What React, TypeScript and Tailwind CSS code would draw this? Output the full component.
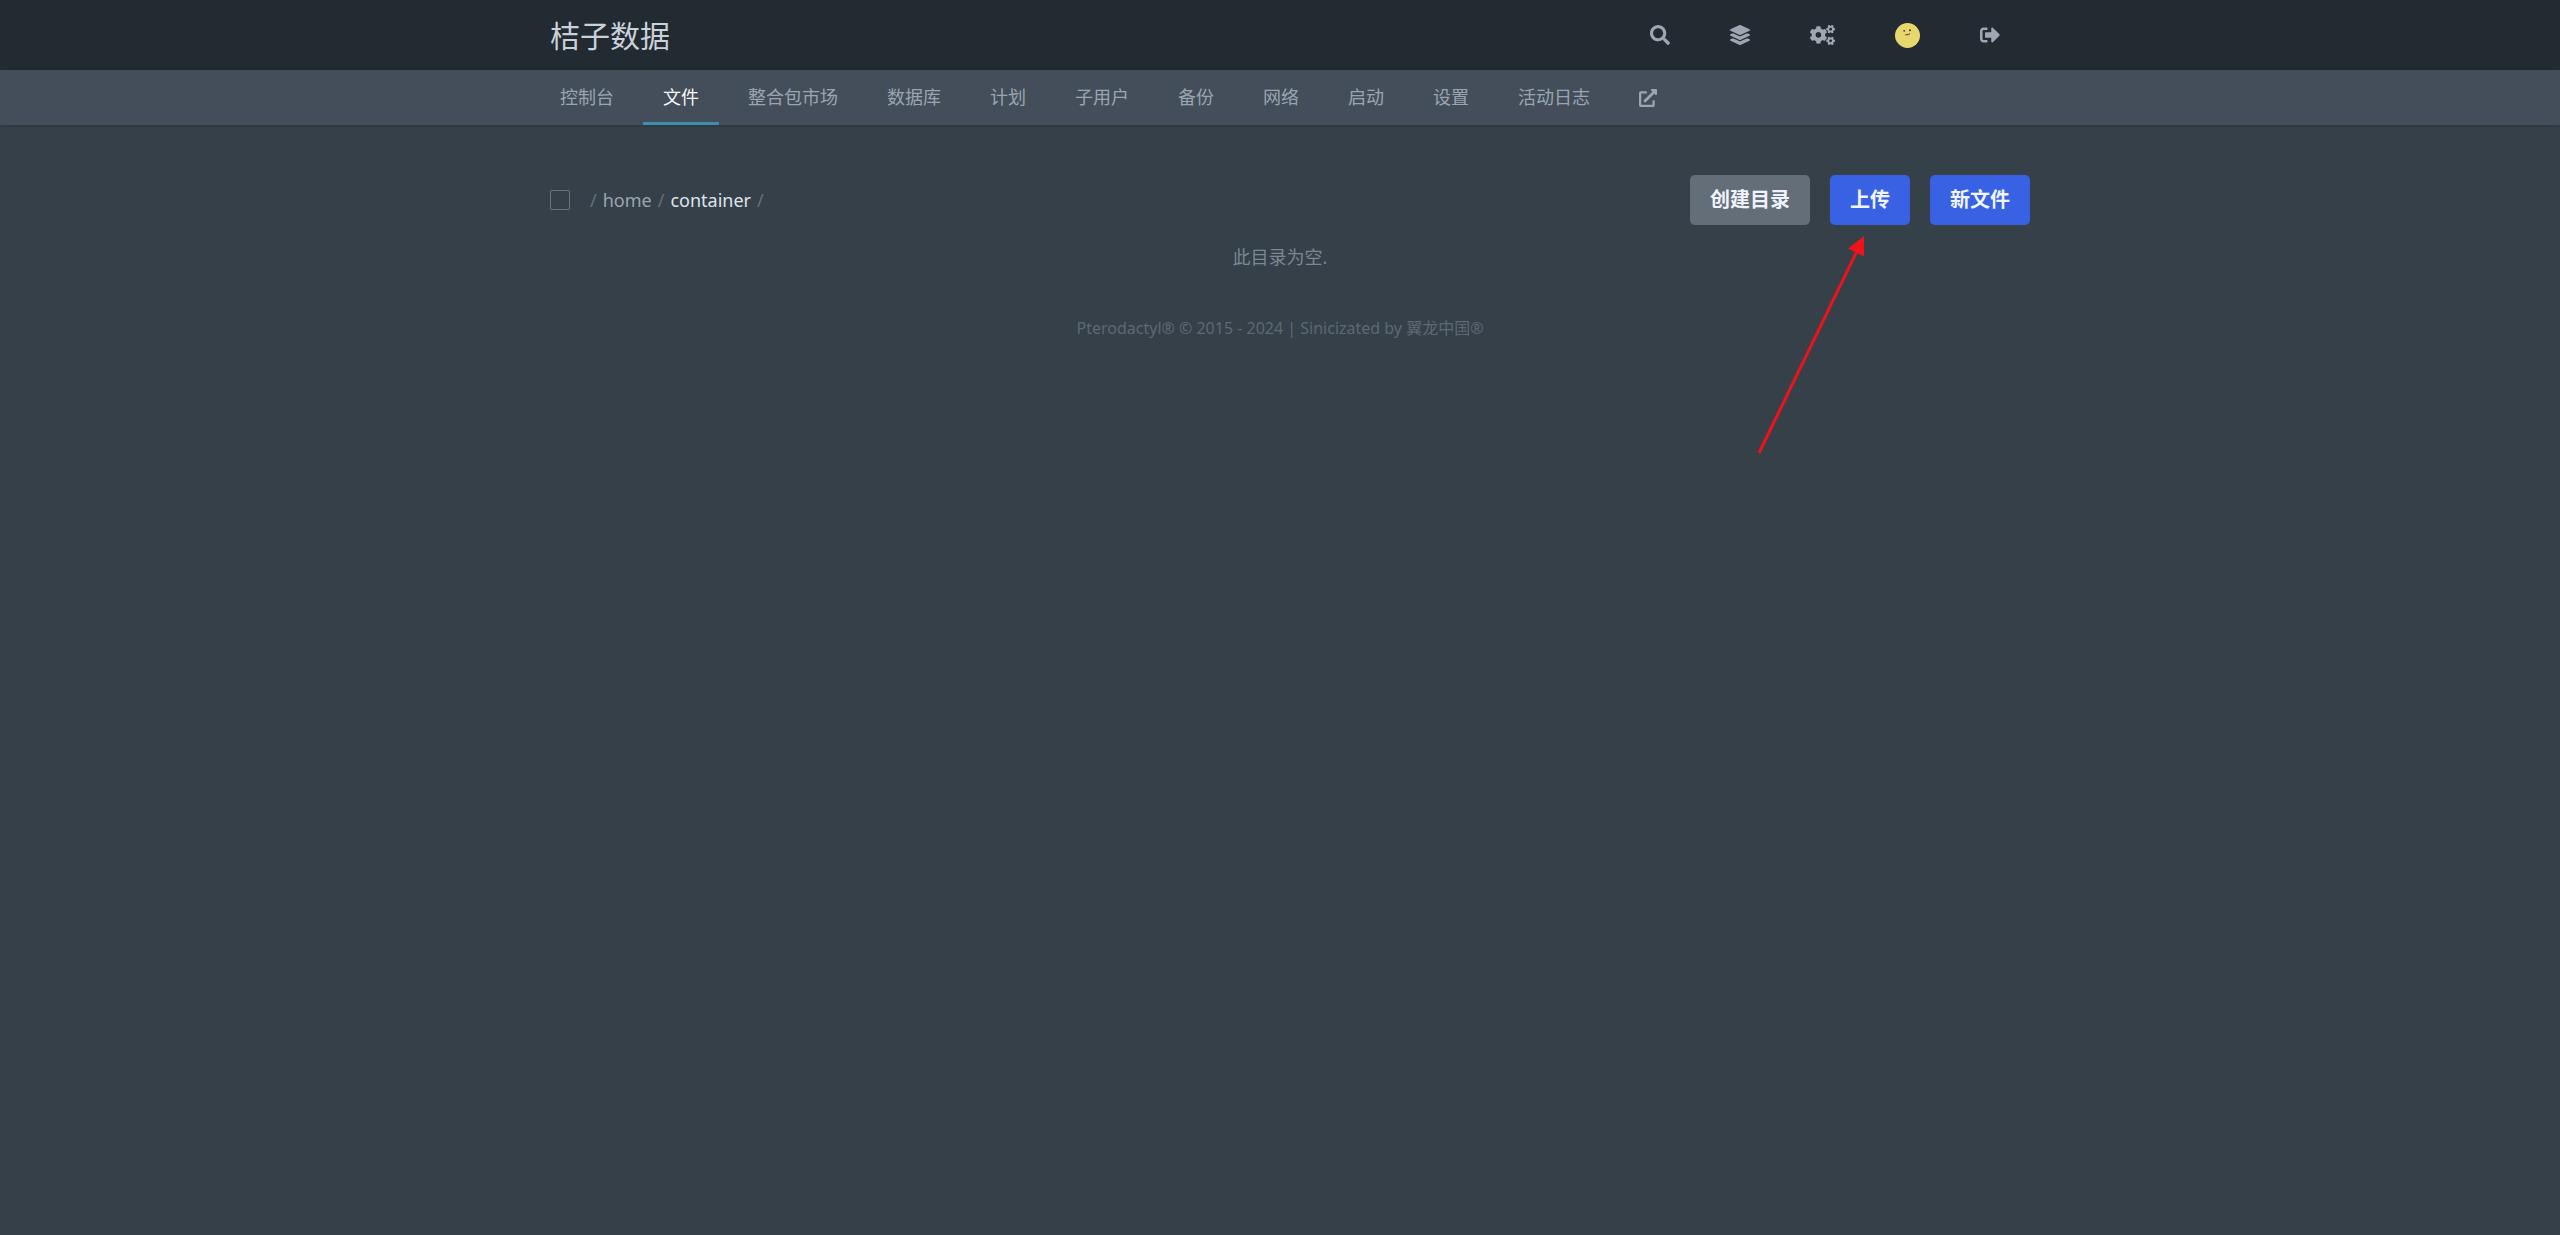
import { ReactNode } from 'react';
import { FaCogs, FaExternalLinkAlt, FaLayerGroup, FaSearch, FaSignOutAlt } from 'react-icons/fa';

const tabs = ['控制台', '文件', '整合包市场', '数据库', '计划', '子用户', '备份', '网络', '启动', '设置', '活动日志'];

const Avatar = () => (
    <svg viewBox="0 0 25 25" className="size-[25px]">
        <defs>
            <clipPath id="avatar">
                <circle cx="12.5" cy="12.5" r="12.5" />
            </clipPath>
        </defs>
        <g clipPath="url(#avatar)">
            <rect width="25" height="25" fill="#e8d66f" />
            <path d="M0 16 Q3 21 9 25 H0 Z" fill="#5f7a94" />
            <circle cx="9.2" cy="7.8" r="0.9" fill="#3c3a2c" />
            <circle cx="15" cy="7.3" r="1" fill="#3c3a2c" />
            <path d="M10.3 11.8 L13.6 11.6 L15 10.5" fill="none" stroke="#3c3a2c" strokeWidth="1" />
        </g>
    </svg>
);

const HeaderLink = ({ label, children }: { label: string; children: ReactNode }) => (
    <a href="#" aria-label={label} className="flex h-full items-center px-[30px] text-[20px] text-[#9fa6b2]">
        {children}
    </a>
);

const Header = () => (
    <header className="bg-[#222a32]">
        <div className="mx-auto flex h-[70px] max-w-[1500px] items-center justify-between">
            <a href="#" className="px-5 text-[30px] text-[#cad1d8]">
                桔子数据
            </a>
            <div className="flex h-full items-center">
                <HeaderLink label="搜索">
                    <FaSearch />
                </HeaderLink>
                <HeaderLink label="服务器">
                    <FaLayerGroup />
                </HeaderLink>
                <HeaderLink label="管理">
                    <FaCogs className="h-5 w-[25px]" />
                </HeaderLink>
                <HeaderLink label="账户">
                    <Avatar />
                </HeaderLink>
                <HeaderLink label="登出">
                    <FaSignOutAlt />
                </HeaderLink>
            </div>
        </div>
    </header>
);

const SubNavigation = () => (
    <nav className="bg-[#444e5a] shadow">
        <div className="mx-auto flex h-[55px] max-w-[1500px] gap-[9px] px-[10px] text-[18px] text-[#9aa5b1]">
            {tabs.map((tab) => (
                <a
                    key={tab}
                    href="#"
                    className={
                        tab === '文件'
                            ? 'flex items-center px-5 text-[#f5f7fa] shadow-[inset_0_-3px_#3d8fb0]'
                            : 'flex items-center px-5'
                    }
                >
                    {tab}
                </a>
            ))}
            <a href="#" aria-label="在管理后台打开" className="flex items-center px-5">
                <FaExternalLinkAlt />
            </a>
        </div>
    </nav>
);

// points at the upload button
const Arrow = () => (
    <svg viewBox="0 0 120 222" className="pointer-events-none absolute -left-20 top-[60px] h-[222px] w-[120px]">
        <path d="M9 218 L107 16" stroke="#ee131b" strokeWidth="3" />
        <path d="M114 1 L98 13.5 L114 21.5 Z" fill="#ee131b" />
    </svg>
);

const FileManager = () => (
    <main className="mx-auto max-w-[1500px] pt-[50px]">
        <div className="flex items-center">
            <input
                type="checkbox"
                aria-label="全选"
                className="ml-5 size-5 appearance-none rounded-[2px] border border-[#6a747f]"
            />
            <div className="ml-5 flex gap-[6px] text-[18px] text-[#64707c]">
                <span>/</span>
                <a href="#" className="text-[#9aa5b1]">
                    home
                </a>
                <span>/</span>
                <a href="#" className="text-[#dfe4ea]">
                    container
                </a>
                <span>/</span>
            </div>
            <div className="ml-auto flex gap-5 text-[20px] font-bold text-[#eff4ff]">
                <button className="h-[50px] rounded-[5px] bg-[#646e79] px-5">创建目录</button>
                <div className="relative">
                    <button className="h-[50px] rounded-[5px] bg-[#3862e3] px-5">上传</button>
                    <Arrow />
                </div>
                <button className="h-[50px] rounded-[5px] bg-[#3862e3] px-5">新文件</button>
            </div>
        </div>
        <p className="mt-5 text-center text-[18px] leading-[25px] text-[#7b8793]">此目录为空.</p>
    </main>
);

export default function App() {
    return (
        <div className="min-h-screen bg-[#364049] font-['Noto_Sans','Noto_Sans_CJK_SC',sans-serif]">
            <Header />
            <SubNavigation />
            <FileManager />
            <footer className="mt-12 text-center text-[16px] leading-5 text-[#5d6874]">
                <a href="#">Pterodactyl®</a> © 2015 - 2024 | Sinicizated by <a href="#">翼龙中国®</a>
            </footer>
        </div>
    );
}
